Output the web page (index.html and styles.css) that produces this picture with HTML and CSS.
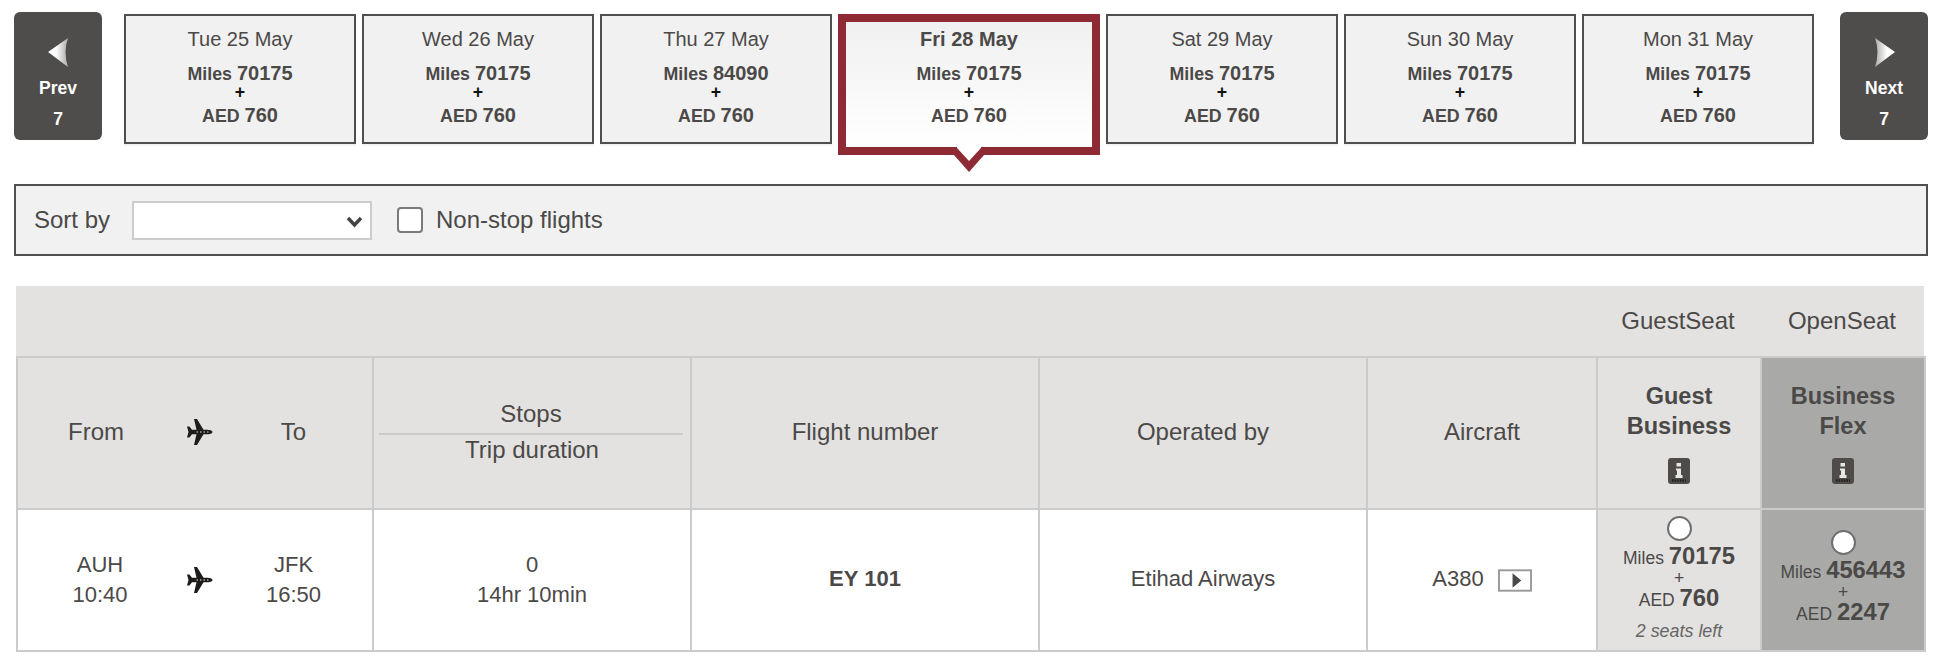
FILE: index.html
```html
<!DOCTYPE html>
<html lang="en">
<head>
    <meta charset="UTF-8">
    <title>Select flight</title>
    <link rel="stylesheet" href="styles.css">
</head>
<body>
    <div class="date-strip">
        <a class="page-btn prev-btn">
            <svg class="page-arrow" width="21" height="30" viewBox="0 0 21 30"><defs><linearGradient id="prevfill" x1="0" y1="0" x2="1" y2="0"><stop offset="0.4" stop-color="#fff"/><stop offset="1" stop-color="#a8a8a6"/></linearGradient></defs><path d="M0 15 L20 1 Q15 15 20 30 Z" fill="url(#prevfill)"/></svg>
            <span class="page-label">Prev</span>
            <span class="page-count">7</span>
        </a>
        <div class="day-card">
            <div class="day-date">Tue 25 May</div>
            <div class="day-miles">Miles <b>70175</b></div>
            <div class="day-plus">+</div>
            <div class="day-aed">AED <b>760</b></div>
        </div>
        <div class="day-card">
            <div class="day-date">Wed 26 May</div>
            <div class="day-miles">Miles <b>70175</b></div>
            <div class="day-plus">+</div>
            <div class="day-aed">AED <b>760</b></div>
        </div>
        <div class="day-card">
            <div class="day-date">Thu 27 May</div>
            <div class="day-miles">Miles <b>84090</b></div>
            <div class="day-plus">+</div>
            <div class="day-aed">AED <b>760</b></div>
        </div>
        <div class="day-card selected">
            <div class="day-date">Fri 28 May</div>
            <div class="day-miles">Miles <b>70175</b></div>
            <div class="day-plus">+</div>
            <div class="day-aed">AED <b>760</b></div>
            <svg class="day-pointer" width="30" height="25" viewBox="0 0 30 25"><path d="M0 8 H30 L15 25 Z" fill="#8d2a33"/><path d="M3 0 H27 V1 L15 14 L3 1 Z" fill="#fff"/></svg>
        </div>
        <div class="day-card">
            <div class="day-date">Sat 29 May</div>
            <div class="day-miles">Miles <b>70175</b></div>
            <div class="day-plus">+</div>
            <div class="day-aed">AED <b>760</b></div>
        </div>
        <div class="day-card">
            <div class="day-date">Sun 30 May</div>
            <div class="day-miles">Miles <b>70175</b></div>
            <div class="day-plus">+</div>
            <div class="day-aed">AED <b>760</b></div>
        </div>
        <div class="day-card">
            <div class="day-date">Mon 31 May</div>
            <div class="day-miles">Miles <b>70175</b></div>
            <div class="day-plus">+</div>
            <div class="day-aed">AED <b>760</b></div>
        </div>
        <a class="page-btn next-btn">
            <svg class="page-arrow" width="21" height="30" viewBox="0 0 21 30"><defs><linearGradient id="nextfill" x1="1" y1="0" x2="0" y2="0"><stop offset="0.4" stop-color="#fff"/><stop offset="1" stop-color="#a8a8a6"/></linearGradient></defs><path d="M21 15 L1 1 Q6 15 1 30 Z" fill="url(#nextfill)"/></svg>
            <span class="page-label">Next</span>
            <span class="page-count">7</span>
        </a>
    </div>

    <div class="filter-bar">
        <label class="sort-label">Sort by</label>
        <div class="sort-select">
            <select></select>
            <svg class="sort-chevron" width="17" height="12" viewBox="0 0 17 12"><path d="M2 2 L8.5 9 L15 2" fill="none" stroke="#454341" stroke-width="3.4"/></svg>
        </div>
        <input type="checkbox" class="nonstop-check" id="nonstop">
        <label class="nonstop-label" for="nonstop">Non-stop flights</label>
    </div>

    <table class="flights">
        <colgroup>
            <col class="col-route">
            <col class="col-stops">
            <col class="col-number">
            <col class="col-operator">
            <col class="col-aircraft">
            <col class="col-guest">
            <col class="col-open">
        </colgroup>
        <tr class="band-row">
            <td colspan="5"></td>
            <td>GuestSeat</td>
            <td>OpenSeat</td>
        </tr>
        <tr class="head-row">
            <th>
                <div class="route">
                    <span class="route-from head-from">From</span>
                    <svg class="plane" width="30" height="26" viewBox="0 0 27 26"><path d="M27 13 C27 14.5 24 15.3 21 15.3 H18 L11.5 26 H8.5 L11 15.3 H6.5 L4 18.5 H1.5 L3 13 L1.5 7.5 H4 L6.5 10.7 H11 L8.5 0 H11.5 L18 10.7 H21 C24 10.7 27 11.5 27 13 Z" fill="#1d1c1b"/><path d="M11 13 H25" stroke="#d8d7d5" stroke-width="1" stroke-dasharray="1.5 2"/></svg>
                    <span class="route-to">To</span>
                </div>
            </th>
            <th>
                <div class="stops-head">Stops</div>
                <div class="trip-head">Trip duration</div>
            </th>
            <th>Flight number</th>
            <th>Operated by</th>
            <th>Aircraft</th>
            <th class="fare-head">
                Guest<br>Business
                <svg class="info-icon" width="22" height="26" viewBox="0 0 22 26"><rect width="22" height="26" rx="3" fill="#4f4b49"/><path d="M8.5 5 H13 V8.5 H8.5 Z M8 10.5 H13 V17 H14.5 V20 H7.5 V17 H9 V12.5 H8 Z" fill="#e6e6e4"/><path d="M4 22.5 H18" stroke="#232120" stroke-width="2.4" stroke-dasharray="1.6 1"/></svg>
            </th>
            <th class="fare-head flex-col">
                Business<br>Flex
                <svg class="info-icon" width="22" height="26" viewBox="0 0 22 26"><rect width="22" height="26" rx="3" fill="#4f4b49"/><path d="M8.5 5 H13 V8.5 H8.5 Z M8 10.5 H13 V17 H14.5 V20 H7.5 V17 H9 V12.5 H8 Z" fill="#e6e6e4"/><path d="M4 22.5 H18" stroke="#232120" stroke-width="2.4" stroke-dasharray="1.6 1"/></svg>
            </th>
        </tr>
        <tr class="data-row">
            <td>
                <div class="route">
                    <span class="route-from">AUH<br>10:40</span>
                    <svg class="plane" width="30" height="26" viewBox="0 0 27 26"><path d="M27 13 C27 14.5 24 15.3 21 15.3 H18 L11.5 26 H8.5 L11 15.3 H6.5 L4 18.5 H1.5 L3 13 L1.5 7.5 H4 L6.5 10.7 H11 L8.5 0 H11.5 L18 10.7 H21 C24 10.7 27 11.5 27 13 Z" fill="#1d1c1b"/><path d="M11 13 H25" stroke="#e8e8e8" stroke-width="1" stroke-dasharray="1.5 2"/></svg>
                    <span class="route-to">JFK<br>16:50</span>
                </div>
            </td>
            <td>0<br>14hr 10min</td>
            <td class="mid-cell"><b>EY 101</b></td>
            <td class="mid-cell">Etihad Airways</td>
            <td class="mid-cell">
                A380
                <svg class="seatmap-icon" width="34" height="23" viewBox="0 0 35 23"><rect x="1" y="1" width="33" height="21" fill="#fff" stroke="#9a9a9a" stroke-width="2"/><path d="M15 4 L24 11.5 L15 19 Z" fill="#4b4948"/></svg>
            </td>
            <td class="fare-cell">
                <input type="radio" name="fare" class="fare-radio">
                <div class="fare-line">Miles <b>70175</b></div>
                <div class="fare-line">+</div>
                <div class="fare-line">AED <b>760</b></div>
                <div class="seats-left">2 seats left</div>
            </td>
            <td class="fare-cell flex-col">
                <input type="radio" name="fare" class="fare-radio">
                <div class="fare-line">Miles <b>456443</b></div>
                <div class="fare-line">+</div>
                <div class="fare-line">AED <b>2247</b></div>
            </td>
        </tr>
    </table>
</body>
</html>
```

FILE: styles.css
```css
* {
    margin: 0;
    padding: 0;
    box-sizing: border-box;
}

body {
    font-family: "Liberation Sans", Arial, sans-serif;
    color: #4b4948;
    background: #fff;
}

.date-strip {
    display: flex;
    align-items: flex-start;
    gap: 6px;
    height: 184px;
    padding: 12px 14px 0;
}

.page-btn {
    display: flex;
    flex-direction: column;
    align-items: center;
    width: 88px;
    height: 128px;
    padding-top: 25px;
    background: #4f4d4b;
    border-radius: 6px;
    color: #fff;
    font-size: 17.5px;
    font-weight: bold;
    line-height: 24px;
}

.prev-btn {
    margin-right: 16px;
}

.next-btn {
    margin-left: 20px;
}

.page-arrow {
    display: block;
    margin-bottom: 9px;
}

.page-count {
    margin-top: 7px;
}

.day-card {
    position: relative;
    width: 232px;
    height: 130px;
    margin-top: 2px;
    padding-top: 8px;
    background: #f1f1f1;
    border: 2px solid #4f4f4f;
    box-shadow: 0 2px 0 #f4f4f4;
    text-align: center;
    font-size: 17.8px;
    font-weight: bold;
}

.day-card b {
    font-size: 20px;
}

.day-date {
    font-size: 20px;
    font-weight: normal;
    line-height: 30px;
}

.day-miles {
    margin-top: 8px;
    line-height: 22px;
}

.day-plus {
    color: #111;
    line-height: 14px;
}

.day-aed {
    margin-top: 5px;
    line-height: 22px;
}

.day-card.selected {
    width: 262px;
    height: 141px;
    padding-top: 2px;
    background: linear-gradient(#f0f0f0, #fff);
    border: 8px solid #8d2a33;
    box-shadow: none;
}

.selected .day-date {
    font-weight: bold;
}

.day-pointer {
    position: absolute;
    left: 108px;
    top: 125px;
}

.filter-bar {
    display: flex;
    align-items: center;
    height: 72px;
    margin: 0 14px;
    padding-left: 18px;
    background: #f1f1f1;
    border: 2px solid #4f4f4f;
    font-size: 24px;
}

.sort-select {
    position: relative;
    width: 240px;
    height: 39px;
    margin-left: 22px;
}

.sort-select select {
    width: 100%;
    height: 100%;
    appearance: none;
    background: #fff;
    border: 2px solid #ccc;
    border-radius: 0;
}

.sort-chevron {
    position: absolute;
    right: 9px;
    top: 15px;
}

.nonstop-check {
    appearance: none;
    width: 26px;
    height: 26px;
    margin: 0 13px 0 25px;
    background: #fff;
    border: 2px solid #7a7a7a;
    border-radius: 4px;
}

.flights {
    width: 1910px;
    margin-left: 16px;
    margin-top: 30px;
    table-layout: fixed;
    border-collapse: separate;
    border-spacing: 0;
    font-size: 24px;
    text-align: center;
}

.col-route { width: 356px; }
.col-stops { width: 318px; }
.col-number { width: 348px; }
.col-operator { width: 328px; }
.col-aircraft { width: 230px; }
.col-guest { width: 164px; }
.col-open { width: 166px; }

.band-row td {
    height: 70px;
    background: #e3e2e0;
}

.band-row td:last-child {
    border-right: 2px solid #fff;
}

.head-row th {
    height: 152px;
    padding: 0 0 2px;
    background: #e3e2e0;
    border-top: 2px solid #cbcbcb;
    border-left: 2px solid #cbcbcb;
    font-weight: normal;
}

.head-row th:last-child,
.data-row td:last-child {
    border-right: 2px solid #cbcbcb;
}

.data-row td {
    height: 144px;
    border-top: 2px solid #cbcbcb;
    border-bottom: 2px solid #cbcbcb;
    border-left: 2px solid #cbcbcb;
    font-size: 22px;
    line-height: 30px;
}

.data-row .mid-cell {
    padding-bottom: 2px;
}

.route {
    display: grid;
    grid-template-columns: 163px 36px 153px;
    align-items: center;
    justify-items: center;
}

.route-from {
    padding-left: 1px;
}

.head-from {
    padding-right: 8px;
}

.stops-head {
    margin: 0 7px 0 5px;
    padding-bottom: 4px;
    border-bottom: 2px solid #cbcbcb;
    line-height: 30px;
}

.trip-head {
    line-height: 30px;
}

.head-row .fare-head {
    font-size: 23.5px;
    font-weight: bold;
    line-height: 30px;
}

.info-icon {
    display: block;
    margin: 17px auto 0;
}

.seatmap-icon {
    margin-left: 8px;
    vertical-align: -6px;
}

.data-row .fare-cell {
    padding-bottom: 2px;
    background: #e3e2e0;
    font-size: 17.5px;
    line-height: 20px;
}

.data-row .flex-col {
    padding-bottom: 7px;
}

.head-row .flex-col,
.data-row .flex-col {
    background: #a9aaa7;
}

.fare-cell b {
    font-size: 23.8px;
}

.fare-radio {
    display: block;
    appearance: none;
    width: 25px;
    height: 25px;
    margin: 0 auto 5px;
    background: #fff;
    border: 2px solid #6f6f6f;
    border-radius: 50%;
}

.seats-left {
    margin-top: 10px;
    font-size: 17.9px;
    font-style: italic;
    line-height: 22px;
    color: #666;
}
```
